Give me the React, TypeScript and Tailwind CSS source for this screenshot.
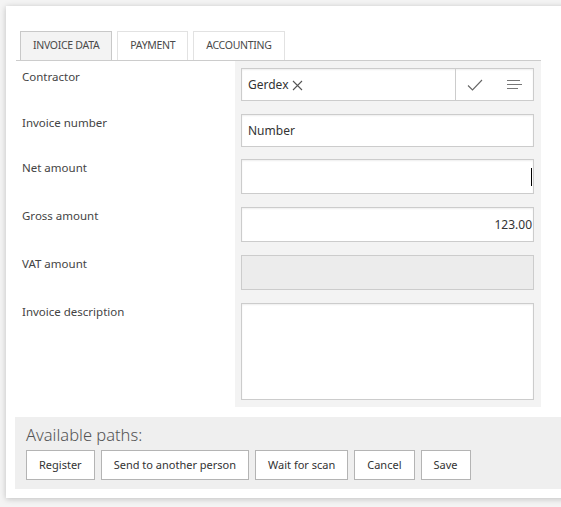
import React from 'react'

const FONT = "font-['Noto_Sans','Open_Sans',sans-serif]"

const tabs = ['INVOICE DATA', 'PAYMENT', 'ACCOUNTING']
const paths = ['Register', 'Send to another person', 'Wait for scan', 'Cancel', 'Save']

function Row({ label, first, last, gap = 'pb-[13px]', children }: { label: string; first?: boolean; last?: boolean; gap?: string; children: React.ReactNode }) {
  return (
    <div className="flex">
      <div className={`w-[219px] pl-[6px] text-[11.5px] leading-[18px] text-[#444] ${first ? 'pt-[7px]' : ''}`}>{label}</div>
      <div className={`w-[306px] bg-[#f3f3f3] pl-[6px] pr-[7px] ${first ? 'pt-[7px]' : ''} ${last ? 'pb-[7px]' : gap}`}>
        {children}
      </div>
    </div>
  )
}

const box = 'border border-[#cccccc] bg-white shadow-[inset_0_1px_2px_rgba(0,0,0,0.07)]'

export default function App() {
  return (
    <div className={`h-[507px] w-[561px] overflow-hidden bg-[#f4f4f4] pt-[6px] pl-[6px] ${FONT}`}>
      <div className="h-[492px] w-[620px] bg-white pl-[10px] pt-[25px] shadow-[0_1px_6px_rgba(0,0,0,0.22)]">

        {/* tabs */}
        <div className="flex w-[525px] gap-[5px] border-b border-[#cccccc] pl-[4px]">
          {tabs.map((t, i) => (
            <div
              key={t}
              className={`flex h-[29px] items-center border border-b-0 px-[12px] text-[10.5px] tracking-[-0.3px] text-[#4a4a4a] ${
                i === 0 ? 'border-[#c8c8c8] bg-[#f3f3f3]' : 'border-[#e2e2e2] bg-white'
              }`}
            >
              {t}
            </div>
          ))}
        </div>

        {/* form */}
        <div className="flex flex-col">
          <Row label="Contractor" first>
            <div className={`flex h-[33px] ${box}`}>
              <div className="flex flex-1 items-center gap-[4px] pl-[6px] text-[12px] text-[#333]">
                Gerdex
                <svg width="11" height="11" viewBox="0 0 11 11" className="mt-[1px]">
                  <path d="M1 1L10 10M10 1L1 10" stroke="#555" strokeWidth="1.1" fill="none" />
                </svg>
              </div>
              <div className="flex w-[78px] items-center border-l border-[#cccccc]">
                <div className="flex w-[39px] justify-center">
                  <svg width="16" height="12" viewBox="0 0 16 12">
                    <path d="M1 6.5L5.5 11L15 1" stroke="#666" strokeWidth="1.1" fill="none" />
                  </svg>
                </div>
                <div className="flex w-[39px] justify-center">
                  <svg width="16" height="11" viewBox="0 0 16 11">
                    <path d="M1 1.5H14M1 5.5H16M1 9.5H12" stroke="#777" strokeWidth="1.2" fill="none" />
                  </svg>
                </div>
              </div>
            </div>
          </Row>
          <Row label="Invoice number" gap="pb-[12px]">
            <div className={`flex h-[33px] items-center pl-[6px] text-[12px] text-[#333] ${box}`}>Number</div>
          </Row>
          <Row label="Net amount">
            <div className={`flex h-[35px] items-center justify-end pr-[1px] ${box}`}>
              <span className="h-[18px] w-px bg-black" />
            </div>
          </Row>
          <Row label="Gross amount">
            <div className={`flex h-[35px] items-center justify-end pr-[1px] text-[12px] text-[#333] ${box}`}>123.00</div>
          </Row>
          <Row label="VAT amount">
            <div className="h-[35px] border border-[#cccccc] bg-[#ececec]" />
          </Row>
          <Row label="Invoice description" last>
            <div className={`h-[97px] ${box}`} />
          </Row>
        </div>

        {/* available paths */}
        <div className="-ml-px mt-[10px] h-[72px] bg-[#efefef] pl-[11px] pt-[6px]">
          <div className="text-[16.5px] font-light leading-[24px] text-[#555]">Available paths:</div>
          <div className="mt-[3px] flex gap-[6px]">
            {paths.map(p => (
              <button
                key={p}
                className="h-[30px] border border-[#b4b4b4] bg-white px-[12px] text-[11px] text-[#333]"
              >
                {p}
              </button>
            ))}
          </div>
        </div>

      </div>
    </div>
  )
}
